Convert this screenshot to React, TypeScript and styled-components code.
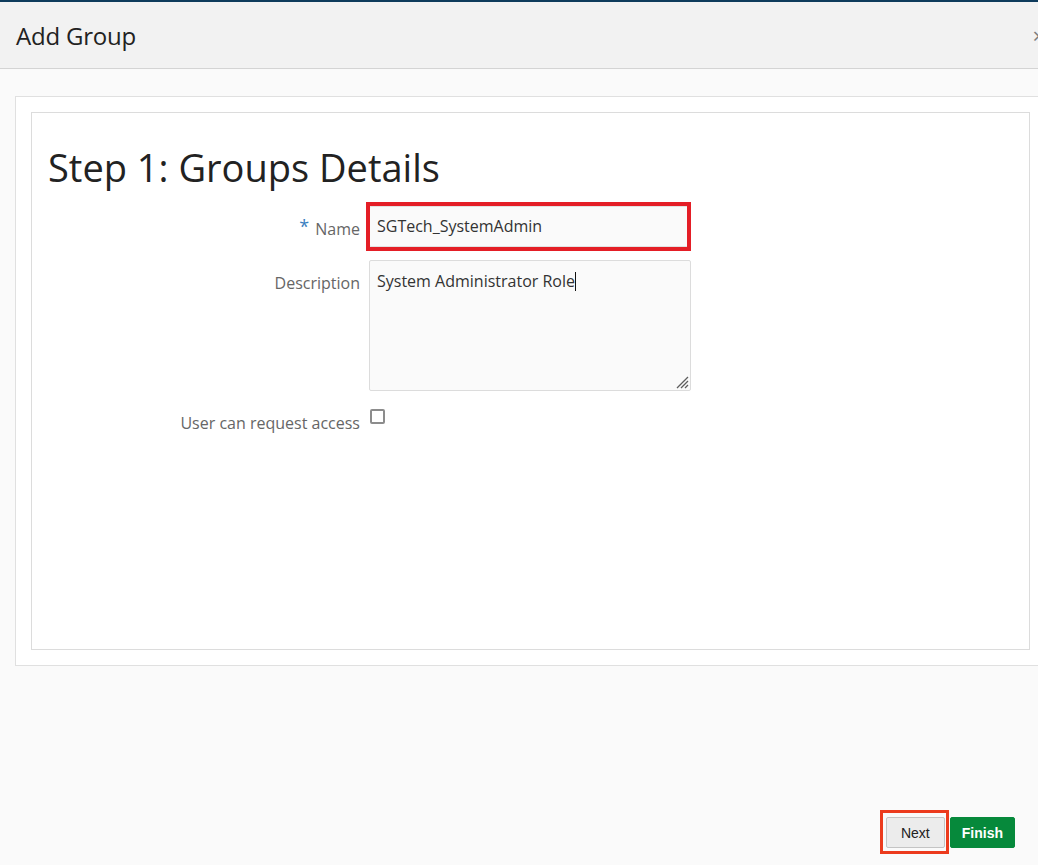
import styled, { createGlobalStyle } from 'styled-components';

const GlobalStyle = createGlobalStyle`
  html, body {
    margin: 0;
    padding: 0;
    overflow: hidden;
    background: #fafafa;
  }
  * {
    box-sizing: border-box;
  }
`;

const Page = styled.div`
  height: 100vh;
  display: flex;
  flex-direction: column;
  background: #fafafa;
  border-top: 2px solid #0e3b5c;
  font-family: "Open Sans", "Noto Sans", sans-serif;
  overflow: hidden;
`;

const Header = styled.div`
  height: 67px;
  flex-shrink: 0;
  display: flex;
  align-items: center;
  justify-content: space-between;
  padding-left: 16px;
  background: #f2f2f2;
  border-bottom: 1px solid #d4d4d4;
`;

const HeaderTitle = styled.h2`
  margin: 0;
  font-size: 24px;
  font-weight: 400;
  color: #222;
  letter-spacing: -0.2px;
`;

const Close = styled.span`
  font-size: 22px;
  color: #7d7d7d;
  margin-right: -7px;
  line-height: 1;
`;

const Content = styled.div`
  flex: 1;
  padding: 27px 0 0 15px;
`;

const OuterPanel = styled.div`
  width: 1031px;
  padding: 15px;
  background: #fff;
  border: 1px solid #e0e0e0;
`;

const InnerPanel = styled.div`
  height: 538px;
  padding: 20px 16px;
  background: #fff;
  border: 1px solid #dcdcdc;
`;

const StepTitle = styled.h1`
  margin: 12px 0 15px;
  font-size: 38px;
  font-weight: 400;
  color: #222;
  line-height: 1.2;
`;

const FormRow = styled.div<{ $gap: number }>`
  display: grid;
  grid-template-columns: 312px 322px;
  column-gap: 9px;
  margin-bottom: ${p => p.$gap}px;
`;

const Label = styled.label`
  text-align: right;
  font-size: 16px;
  line-height: 20px;
  padding-top: 13px;
  color: #666;
`;

const Required = styled.span`
  color: #3b7fc0;
  font-size: 18px;
  margin-right: 6px;
  vertical-align: top;
  position: relative;
  top: -3px;
`;

const Annotated = styled.div<{ $l: number; $t: number; $r: number; $b: number; $w: number; $c: string }>`
  position: relative;

  &::after {
    content: "";
    position: absolute;
    left: ${p => -p.$l}px;
    top: ${p => -p.$t}px;
    right: ${p => -p.$r}px;
    bottom: ${p => -p.$b}px;
    border: ${p => p.$w}px solid ${p => p.$c};
    pointer-events: none;
  }
`;

const TextInput = styled.div`
  height: 41px;
  padding: 0 7px;
  display: flex;
  align-items: center;
  background: #fafafa;
  border: 1px solid #e2e2e2;
  border-radius: 2px;
  font-size: 16px;
  color: #333;
`;

const TextArea = styled.div`
  position: relative;
  height: 131px;
  padding: 8px 7px;
  background: #fafafa;
  border: 1px solid #dcdcdc;
  border-radius: 2px;
  font-size: 16px;
  line-height: 24px;
  color: #333;
`;

const Caret = styled.span`
  display: inline-block;
  width: 1px;
  height: 19px;
  background: #111;
  vertical-align: -4px;
`;

const Grip = styled.svg`
  position: absolute;
  right: 1px;
  bottom: 1px;
`;

const CheckBox = styled.span`
  display: block;
  width: 15px;
  height: 15px;
  margin-top: 9px;
  margin-left: 1px;
  border: 2px solid #8c8c8c;
  border-radius: 2px;
  background: #fff;
`;

const Footer = styled.div`
  display: flex;
  justify-content: flex-end;
  gap: 5px;
  padding: 0 23px 17px 0;
`;

const Button = styled.button<{ $primary?: boolean }>`
  height: 31px;
  padding: 0 ${p => (p.$primary ? 11 : 14)}px;
  border-radius: 2px;
  font-family: "Liberation Sans", Arial, sans-serif;
  font-size: 14px;
  font-weight: ${p => (p.$primary ? 700 : 400)};
  color: ${p => (p.$primary ? '#fff' : '#222')};
  background: ${p => (p.$primary ? '#06893b' : '#ececec')};
  border: 1px solid ${p => (p.$primary ? '#06893b' : '#c4c4c4')};
`;

export default function App() {
  return (
    <Page>
      <GlobalStyle />
      <Header>
        <HeaderTitle>Add Group</HeaderTitle>
        <Close>×</Close>
      </Header>
      <Content>
        <OuterPanel>
          <InnerPanel>
            <StepTitle>Step 1: Groups Details</StepTitle>
            <FormRow $gap={13}>
              <Label>
                <Required>*</Required>Name
              </Label>
              <Annotated $l={3} $t={4} $r={0} $b={4} $w={4} $c="#e41e26">
                <TextInput>SGTech_SystemAdmin</TextInput>
              </Annotated>
            </FormRow>
            <FormRow $gap={9}>
              <Label>Description</Label>
              <TextArea>
                System Administrator Role<Caret />
                <Grip width="16" height="16" viewBox="0 0 16 16">
                  <path d="M15 4 L4 15 M15 8 L8 15 M15 12 L12 15" stroke="#5e5e5e" strokeWidth="1.3" />
                </Grip>
              </TextArea>
            </FormRow>
            <FormRow $gap={0}>
              <Label>User can request access</Label>
              <div>
                <CheckBox />
              </div>
            </FormRow>
          </InnerPanel>
        </OuterPanel>
      </Content>
      <Footer>
        <Annotated $l={6} $t={7} $r={4} $b={6} $w={3} $c="#ec3b1d">
          <Button>Next</Button>
        </Annotated>
        <Button $primary>Finish</Button>
      </Footer>
    </Page>
  );
}
